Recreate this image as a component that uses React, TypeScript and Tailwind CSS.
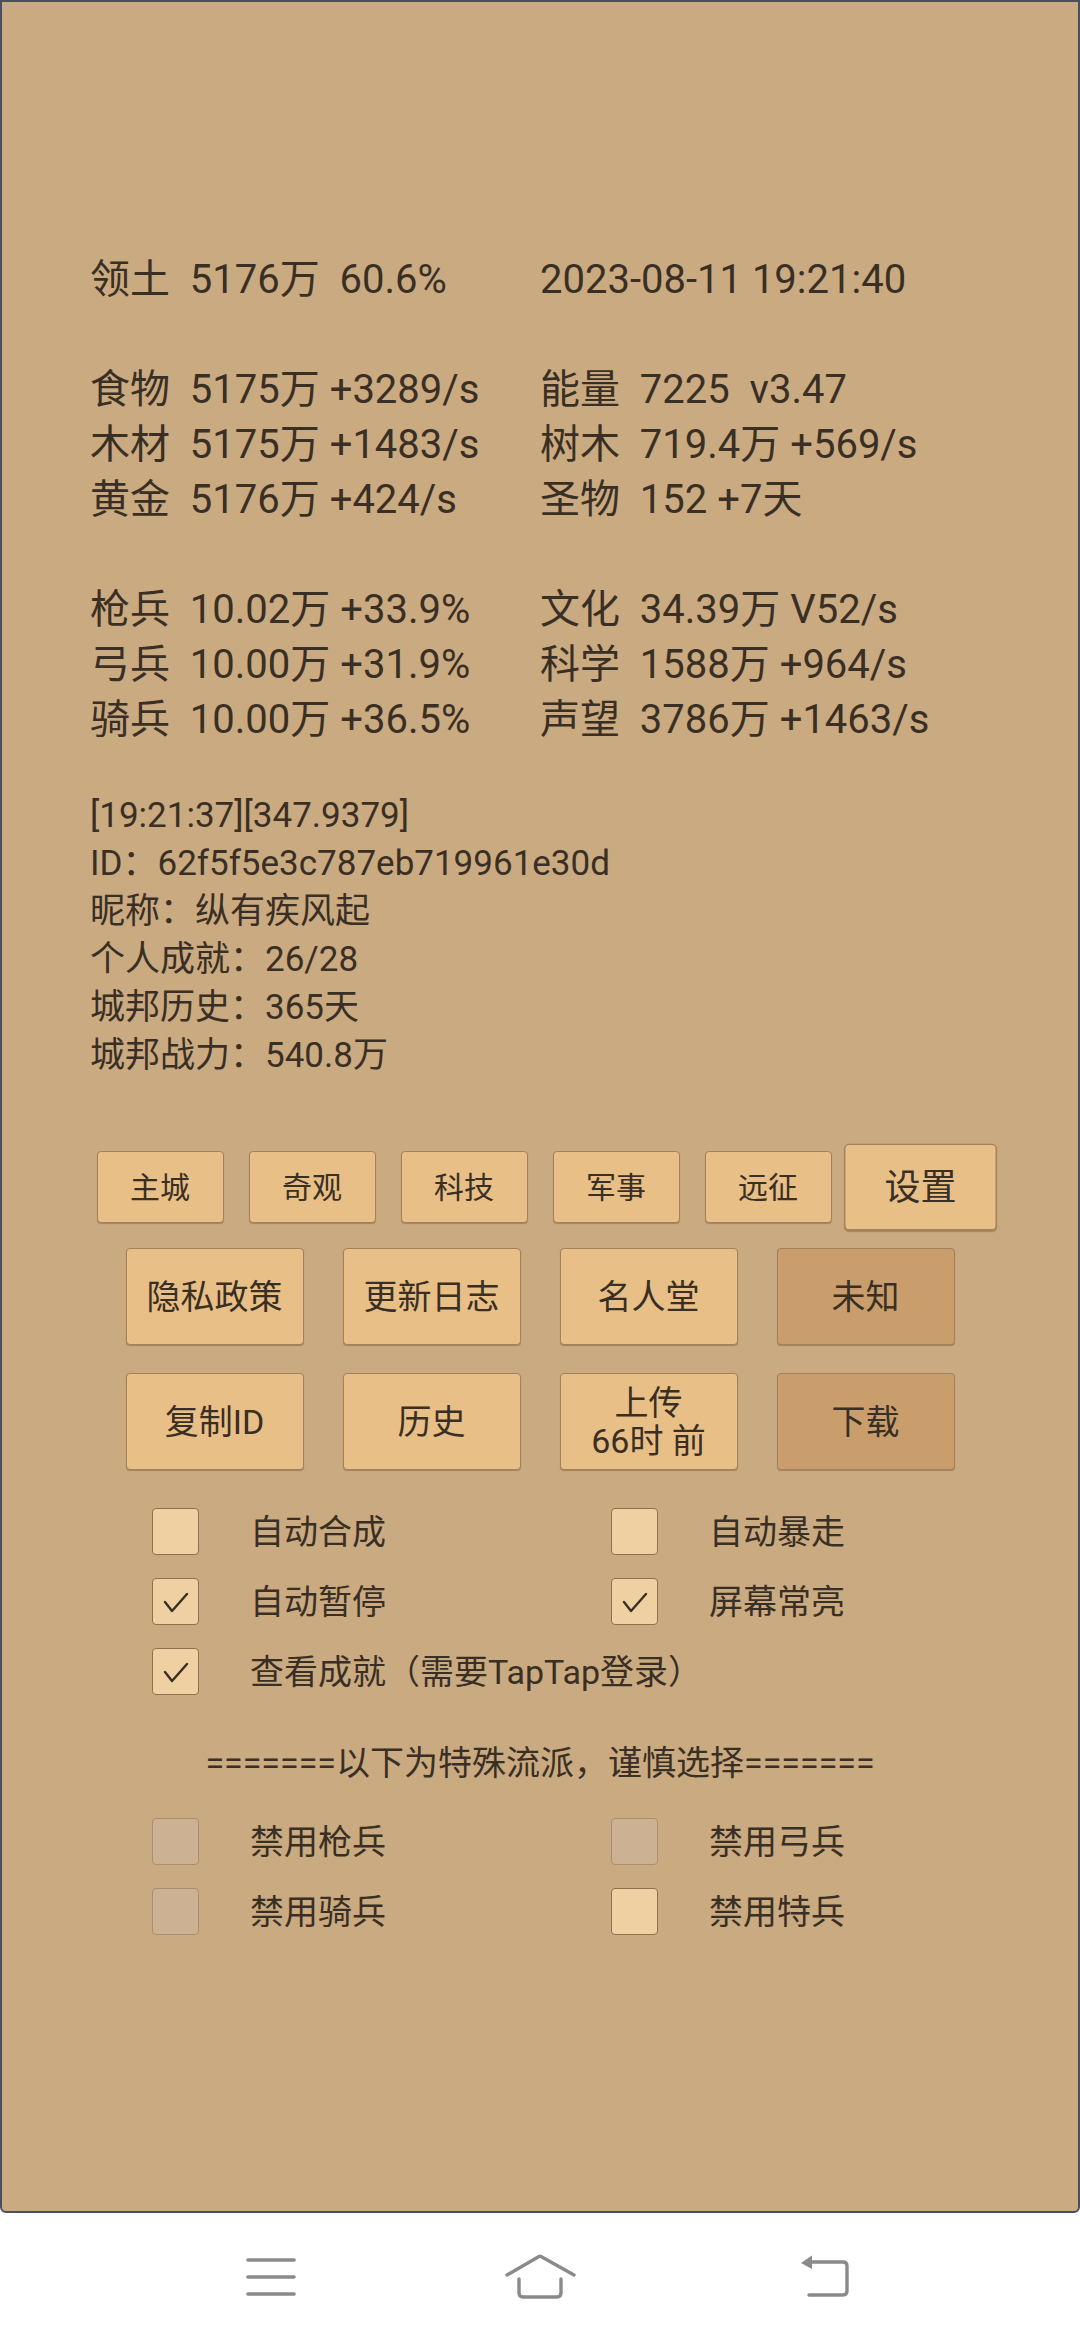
import React from 'react';

const font = { fontFamily: 'Roboto, "Noto Sans CJK SC", sans-serif' };

const statRows: ([string, string] | null)[] = [
  ['领土  5176万  60.6%', '2023-08-11 19:21:40'],
  null,
  ['食物  5175万 +3289/s', '能量  7225  v3.47'],
  ['木材  5175万 +1483/s', '树木  719.4万 +569/s'],
  ['黄金  5176万 +424/s', '圣物  152 +7天'],
  null,
  ['枪兵  10.02万 +33.9%', '文化  34.39万 V52/s'],
  ['弓兵  10.00万 +31.9%', '科学  1588万 +964/s'],
  ['骑兵  10.00万 +36.5%', '声望  3786万 +1463/s'],
];

const infoLines = [
  '[19:21:37][347.9379]',
  'ID：62f5f5e3c787eb719961e30d',
  '昵称：纵有疾风起',
  '个人成就：26/28',
  '城邦历史：365天',
  '城邦战力：540.8万',
];

const tabs = ['主城', '奇观', '科技', '军事', '远征', '设置'];

function Check() {
  return (
    <svg width="47" height="47" viewBox="0 0 47 47" className="absolute inset-0">
      <path d="M12 23 L19 32 L34 15" fill="none" stroke="#3a2f24" strokeWidth="2.4" strokeLinecap="round" strokeLinejoin="round" />
    </svg>
  );
}

function Box({ checked, disabled }: { checked?: boolean; disabled?: boolean }) {
  return (
    <div
      className={`relative w-[47px] h-[47px] shrink-0 rounded-[4px] border ${
        disabled ? 'bg-[#ccb292] border-[#a88f70]' : 'bg-[#efd0a2] border-[#8c7050]'
      }`}
    >
      {checked && <Check />}
    </div>
  );
}

function Option({ label, checked, disabled }: { label: string; checked?: boolean; disabled?: boolean }) {
  return (
    <div className="flex items-center w-[459px] h-[47px]">
      <Box checked={checked} disabled={disabled} />
      <span className="ml-[51px] text-[34px] leading-none whitespace-nowrap">{label}</span>
    </div>
  );
}

function BigButton({ children, dark }: { children: React.ReactNode; dark?: boolean }) {
  return (
    <div
      className={`w-[178px] h-[97px] flex items-center justify-center text-center rounded-[4px] border border-[#a3815a] shadow-[0_1px_1px_rgba(90,60,30,0.35)] text-[34px] leading-[38px] ${
        dark ? 'bg-[#c99e6c]' : 'bg-[#e8bf86]'
      }`}
    >
      {children}
    </div>
  );
}

export default function App() {
  return (
    <div className="w-[1080px] h-[2340px] flex flex-col bg-white text-[#3a2f24]" style={font}>
      <div className="h-[2213px] shrink-0 bg-[#caaa81] border-2 border-[#4b4e62] rounded-b-[6px] flex flex-col">
        {/* stats */}
        <div className="pt-[250px] pl-[88px] text-[40px] leading-[55px]">
          {statRows.map((row, i) =>
            row ? (
              <div key={i} className="flex h-[55px] whitespace-pre">
                <span className="w-[450px]">{row[0]}</span>
                <span>{row[1]}</span>
              </div>
            ) : (
              <div key={i} className="h-[55px]" />
            )
          )}
        </div>

        {/* info */}
        <div className="mt-[45px] pl-[88px] text-[35px] leading-[48px]">
          {infoLines.map((l) => (
            <div key={l} className="h-[48px] whitespace-pre">
              {l}
            </div>
          ))}
        </div>

        {/* tab buttons */}
        <div className="mt-[71px] flex justify-center gap-[25px]">
          {tabs.map((t, i) => (
            <div
              key={t}
              className={`w-[127px] h-[72px] flex items-center justify-center rounded-[4px] border border-[#a3815a] bg-[#e8bf86] shadow-[0_1px_1px_rgba(90,60,30,0.35)] text-[30px] ${
                i === 5 ? 'scale-[1.2]' : ''
              }`}
            >
              {t}
            </div>
          ))}
        </div>

        <div className="mt-[25px] flex justify-center gap-[39px]">
          <BigButton>隐私政策</BigButton>
          <BigButton>更新日志</BigButton>
          <BigButton>名人堂</BigButton>
          <BigButton dark>未知</BigButton>
        </div>

        <div className="mt-[28px] flex justify-center gap-[39px]">
          <BigButton>复制ID</BigButton>
          <BigButton>历史</BigButton>
          <BigButton>
            上传
            <br />
            66时 前
          </BigButton>
          <BigButton dark>下载</BigButton>
        </div>

        {/* options */}
        <div className="mt-[38px] pl-[150px] flex flex-col gap-[23px]">
          <div className="flex">
            <Option label="自动合成" />
            <Option label="自动暴走" />
          </div>
          <div className="flex">
            <Option label="自动暂停" checked />
            <Option label="屏幕常亮" checked />
          </div>
          <div className="flex">
            <Option label="查看成就（需要TapTap登录）" checked />
          </div>
        </div>

        <div className="mt-[44px] h-[48px] text-center text-[34px] leading-[48px] whitespace-pre">
          =======以下为特殊流派，谨慎选择=======
        </div>

        <div className="mt-[31px] pl-[150px] flex flex-col gap-[23px]">
          <div className="flex">
            <Option label="禁用枪兵" disabled />
            <Option label="禁用弓兵" disabled />
          </div>
          <div className="flex">
            <Option label="禁用骑兵" disabled />
            <Option label="禁用特兵" />
          </div>
        </div>
      </div>

      {/* navigation bar */}
      <div className="flex-1 flex items-center pl-[246px]">
        <svg width="50" height="40" viewBox="0 0 50 40">
          <g stroke="#8a8a8a" strokeWidth="3.6" strokeLinecap="round">
            <line x1="2" y1="3" x2="48" y2="3" />
            <line x1="2" y1="20" x2="48" y2="20" />
            <line x1="2" y1="37" x2="48" y2="37" />
          </g>
        </svg>
        <svg width="72" height="46" viewBox="0 0 72 46" className="ml-[209px]">
          <g fill="none" stroke="#8a8a8a" strokeWidth="3.4" strokeLinecap="round" strokeLinejoin="round">
            <path d="M2 21 L34 2.5 Q35 2 36 2.5 L69 21" />
            <path d="M14 25 V39 Q14 43 18 43 H52 Q56 43 56 39 V25" />
          </g>
        </svg>
        <svg width="52" height="46" viewBox="0 0 52 46" className="ml-[222px]">
          <g fill="none" stroke="#8a8a8a" strokeWidth="3.4" strokeLinecap="round" strokeLinejoin="round">
            <path d="M12 8 H44 Q48 8 48 12 V37 Q48 41 44 41 H10" />
          </g>
          <path d="M2 9 L13 1.5 L13 15 Z" fill="#8a8a8a" />
        </svg>
      </div>
    </div>
  );
}
